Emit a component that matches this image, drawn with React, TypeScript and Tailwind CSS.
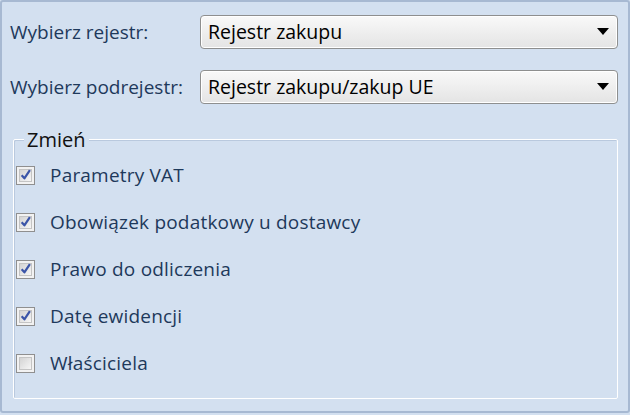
const font = { fontFamily: '"Open Sans", "Noto Sans", sans-serif' };

const options = [
  { label: 'Parametry VAT', checked: true },
  { label: 'Obowiązek podatkowy u dostawcy', checked: true },
  { label: 'Prawo do odliczenia', checked: true },
  { label: 'Datę ewidencji', checked: true },
  { label: 'Właściciela', checked: false },
];

function Combo({ value }: { value: string }) {
  return (
    <div className="flex h-[34px] flex-1 items-center justify-between rounded-[4px] border border-[#8e8f8f] bg-gradient-to-b from-[#f9f9f9] to-[#e4e4e4] pl-[7px] pr-[8px] shadow-[inset_0_0_0_1px_#ffffff]">
      <span className="text-[19.5px] font-medium text-black">{value}</span>
      <svg width="12" height="8" viewBox="0 0 12 8">
        <path d="M0 0h12L6 7z" fill="#000" />
      </svg>
    </div>
  );
}

function CheckBox({ checked }: { checked: boolean }) {
  return (
    <div className="flex h-[19px] w-[19px] items-center justify-center border border-[#8f8f8f] bg-[#f2f2f2] p-[2px]">
      <div className="flex h-full w-full items-center justify-center border border-[#c4c4c4] bg-gradient-to-br from-[#d4d4d4] to-[#f6f6f6]">
        {checked && (
          <svg width="13" height="13" viewBox="0 0 12 12" className="-mt-[1px]">
            <path d="M1.8 6.8 L4.8 10.2 L10.8 1.2" fill="none" stroke="#3b55a8" strokeWidth="2.4" strokeLinejoin="round" />
          </svg>
        )}
      </div>
    </div>
  );
}

export default function App() {
  return (
    <div style={font} className="h-[415px] w-[630px] bg-[#d3e0f0]">
      <div className="flex h-[413px] flex-col rounded-[3px] border-2 border-[#a7b9d2] bg-[#d3e0f0] px-[8px] pt-[13px]">
        <div className="flex items-center">
          <span className="w-[190px] text-[19px] font-medium text-[#1e395b]">Wybierz rejestr:</span>
          <Combo value="Rejestr zakupu" />
          <span className="w-[2px]" />
        </div>
        <div className="mt-[21px] flex items-center">
          <span className="w-[190px] text-[19px] font-medium text-[#1e395b]">Wybierz podrejestr:</span>
          <Combo value="Rejestr zakupu/zakup UE" />
          <span className="w-[2px]" />
        </div>

        <div className="relative mt-[35px] mr-[2px] ml-[3px] h-[260px] rounded-[2px] border border-white shadow-[inset_1px_1px_0_#b9c9de]">
          <span className="absolute -top-[15px] left-[10px] bg-[#d3e0f0] px-[3px] text-[20px] font-medium text-[#111]">
            Zmień
          </span>
          <div className="flex flex-col gap-[27px] pt-[25px] pl-[2px]">
            {options.map((o) => (
              <div key={o.label} className="flex items-center gap-[15px]">
                <CheckBox checked={o.checked} />
                <span className="text-[19px] font-medium leading-[20px] tracking-[0.2px] text-[#1e395b]">{o.label}</span>
              </div>
            ))}
          </div>
        </div>
      </div>
    </div>
  );
}
